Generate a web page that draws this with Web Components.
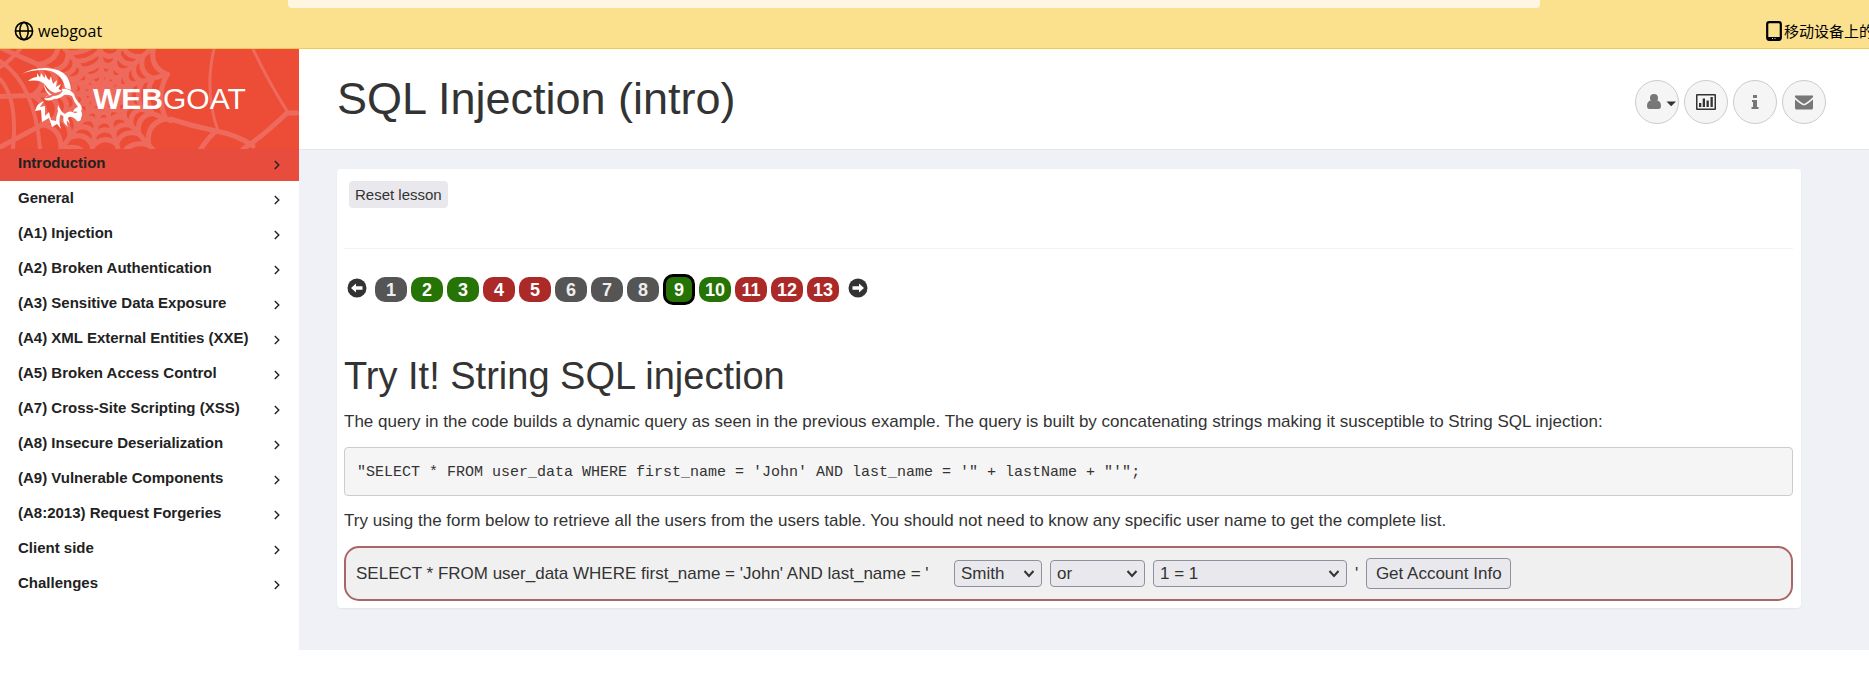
<!DOCTYPE html>
<html lang="en">
<head>
<meta charset="utf-8">
<title>WebGoat</title>
<style>
html,body{margin:0;background:#fff}
body{font-family:"Liberation Sans",Arial,sans-serif;color:#333;font-size:17px}
</style>
</head>
<body>
<goat-app></goat-app>
<script>
const define=(name,html,setup)=>customElements.define(name,class extends HTMLElement{
  constructor(){
    super();
    const t=document.createElement('template');
    t.innerHTML='<style>*{box-sizing:border-box}:host{display:block;box-sizing:border-box}</style>'+html;
    this.attachShadow({mode:'open'}).append(t.content.cloneNode(true));
  }
  connectedCallback(){if(setup)setup(this,this.shadowRoot)}
});

define('bookmark-bar',`<style>
:host{height:49px;background:#fbe18e;border-bottom:1px solid #f3c950;color:#000;font:16px "Open Sans","Noto Sans CJK SC",sans-serif;overflow:hidden}
.field{height:8px;margin:0 329px 0 288px;border-radius:0 0 4px 4px;background:#fff6e1}
.row{display:flex;justify-content:space-between;align-items:center;height:46px}
a{display:flex;align-items:center;color:inherit;text-decoration:none;white-space:nowrap;line-height:24px}
.l{gap:4px;margin-left:14px}
.r{gap:2px;width:103px;font-size:15px;font-family:"Noto Sans CJK SC",sans-serif}
svg{flex:none}
</style>
<div class="field"></div>
<div class="row">
<a class="l" href="#"><svg width="20" height="20" viewBox="0 0 20 20" fill="none" stroke="#000" stroke-width="1.6"><circle cx="10" cy="10" r="8.6"/><ellipse cx="10" cy="10" rx="4.2" ry="8.6"/><path d="M1.5 10h17"/></svg><span>webgoat</span></a>
<a class="r" href="#"><svg width="16" height="20" viewBox="0 0 16 20"><rect x="1.2" y="1.2" width="13.6" height="17.6" rx="2" fill="none" stroke="#000" stroke-width="2.2"/><path d="M1 16h14v2.500H1z"/><path d="M6 17.500h1M8.500 17.500h1" stroke="#fbe18e"/></svg><span>移动设备上的</span></a>
</div>`);

define('goat-logo',`<style>
:host{height:100px;background:#ed4c37;overflow:hidden}
.g{display:grid}.g>*{grid-area:1/1}
a{display:flex;align-items:center;height:100px;padding-left:22px;gap:10px;color:#fff;text-decoration:none;font-size:30px;line-height:36px}
b{font-weight:700}
</style>
<div class="g">
<svg class="web" width="299" height="100" viewBox="0 0 299 100" fill="none" stroke="#ee6a5c" stroke-linecap="round"></svg>
<a href="#"><svg width="61" height="62" viewBox="0 0 61 62" fill="#fff">
<path d="M0 6Q9 0 24 0Q43 1 47 13Q49 17 49 22L43 20Q42 12 36 7Q30 2 21 2Q8 2 0 6z"/>
<path d="M6 13Q12 8 20 9Q27 10 31 16Q34 20 40 23L33 25Q27 23 24 18Q19 11 6 13z"/>
<path d="M15 5l3 5 1-5 4 6 0-5 4 7 2-5 2 8 4-4-1 7 5-3-3 6-4-1-8-8-9-4z"/>
<path d="M22 16Q24 23 30 27Q25 27 23 30Q27 31 31 28Q37 28 40 24L44 25Q39 31 32 31Q26 34 22 31L27 27Q22 22 22 16z"/>
<path d="M40 21Q47 20 52 26Q53 31 58 36Q61 40 59 43Q61 46 59 50Q59 54 55 53Q51 48 47 49Q43 52 46 59Q39 54 42 47Q47 41 53 45L56 44Q53 43 51 44Q52 40 56 39Q52 34 50 28Q46 26 41 27z"/>
<path d="M22 33Q15 35 13 43L19 42L20 54L27 50L30 59L35 56L39 61Q36 52 39 45L36 43Q34 49 34 53L29 52L27 44L23 48L23 38L18 39z"/>
<path d="M36 37Q34 45 41 48L48 56Q45 46 40 44z"/>
</svg><span><b>WEB</b>GOAT</span></a></div>`,(h,r)=>{
  const cx=102,cy=44;
  const ang=[-92,-68,-42,-16,22,48,74,100,126,152,178,204,230];
  const reach=[90,90,90,66,74,100,90,90,100,130,140,120,100];
  const p=(a,d)=>{const t=a*Math.PI/180;return (cx+Math.cos(t)*d).toFixed(1)+' '+(cy+Math.sin(t)*d).toFixed(1)};
  let s='';
  ang.forEach((a,i)=>{
    const b=ang[(i+1)%ang.length]+(i===ang.length-1?360:0);
    s+=`<path stroke-width="5" d="M${cx} ${cy}L${p(a,reach[i])}"/>`;
    [11,21,31,42,53,68].forEach((d,k)=>{s+=`<path stroke-width="${k<3?6:5}" d="M${p(a,d+(i%3))}Q${p((a+b)/2,d*.78)} ${p(b,d+((i+1)%3))}"/>`});
  });
  s+=`<path stroke-width="5" d="M170 70Q192 77 216 82Q238 86 253 97M216 82Q207 90 200 101M243 100Q262 88 287 64M287 64H297"/>
  <path stroke-width="3" d="M287 62Q268 32 253 0M218 82Q204 42 214 0"/>
  <path stroke-width="4" d="M0 30Q18 50 13 100M0 12Q35 35 40 100M20 0Q8 14 0 18"/>`;
  r.querySelector('.web').innerHTML=s;
});

define('nav-item',`<style>
:host{height:35px}
:host([active]){height:32px;background:#e84c3d}
a{display:flex;align-items:center;justify-content:space-between;height:34px;padding:0 19px 0 18px;color:#222;text-decoration:none;font-weight:700;font-size:15px;line-height:20px}
:host([active]) a{height:28px}
svg{margin-top:3px}
</style><a href="#"><slot></slot><svg width="6" height="10" viewBox="0 0 6 10" fill="none" stroke="#222" stroke-width="1.4"><path d="M.8 1l4 4-4 4"/></svg></a>`);

define('side-nav',`<style>:host{width:299px;flex:none;background:#fff}</style>
<goat-logo></goat-logo><nav>
<nav-item active>Introduction</nav-item><nav-item>General</nav-item><nav-item>(A1) Injection</nav-item><nav-item>(A2) Broken Authentication</nav-item><nav-item>(A3) Sensitive Data Exposure</nav-item><nav-item>(A4) XML External Entities (XXE)</nav-item><nav-item>(A5) Broken Access Control</nav-item><nav-item>(A7) Cross-Site Scripting (XSS)</nav-item><nav-item>(A8) Insecure Deserialization</nav-item><nav-item>(A9) Vulnerable Components</nav-item><nav-item>(A8:2013) Request Forgeries</nav-item><nav-item>Client side</nav-item><nav-item>Challenges</nav-item></nav>`);

define('round-button',`<style>
button{display:flex;align-items:center;justify-content:center;width:44px;height:44px;padding:0;border:1px solid #ccc;border-radius:50%;background:#f5f5f5;color:#777}
</style><button type="button"><slot></slot></button>`,(h,r)=>r.querySelector('button').setAttribute('aria-label',h.getAttribute('label')));

define('lesson-header',`<style>
:host{display:flex;justify-content:space-between;align-items:center;height:101px;padding:0 43px 0 38px;background:#fff;border-bottom:1px solid #e4e6eb}
h1{margin:0;font-size:45px;line-height:50px;font-weight:400}
.b{display:flex;gap:5px;padding-top:6px}
</style><h1>SQL Injection (intro)</h1>
<div class="b">
<round-button label="User menu"><svg width="40" height="18" viewBox="0 0 40 18"><g fill="#777"><circle cx="17" cy="5" r="4"/><path d="M10 13q0-5 4-5.500q3 2 6 0q4 .5 4 5.500q0 3-2.500 3h-9Q10 16 10 13z"/></g><path fill="#333" d="M29.500 8.500h9.500L34.200 13.300z"/></svg></round-button>
<round-button label="Report card"><svg width="20" height="16" viewBox="0 0 20 16" fill="#333"><path fill-rule="evenodd" d="M1 0h18q1 0 1 1v14q0 1-1 1H1q-1 0-1-1V1q0-1 1-1zM1.500 1.500v13h17v-13z"/><path d="M3 9h2.300v4H3zM6.700 4.500H9V13H6.700zM10.500 6.500h2.300V13h-2.300zM14.500 3h2.300v10h-2.300z"/></svg></round-button>
<round-button label="About"><svg width="8" height="16" viewBox="0 0 8 16" fill="#777"><path d="M2 1h4v3H2zM1 6h5v7h1.500v2H.500v-2H2V8H1z"/></svg></round-button>
<round-button label="Contact"><svg width="20" height="16" viewBox="0 0 20 16" fill="#777"><path d="M1 1.500h18v1.800Q15 7 11 9.500q-1 .6-2 0Q5 7 1 3.300zM1 5.500Q5 9 8 10.700q2 1.200 4 0Q15 9 19 5.500V14q0 1.500-1.500 1.500h-15Q1 15.500 1 14z"/></svg></round-button>
</div>`);

define('page-link',`<style>
a{display:block;width:32px;height:25px;border-radius:10px;background:#555;color:#eee;text-align:center;text-decoration:none;font-weight:700;font-size:18px;line-height:27px}
:host([state=done]) a{background:#267306;color:#fff}
:host([state=todo]) a{background:#ab2a27;color:#fff}
:host([current]) a{height:31px;border:3px solid #000;width:32px}
</style><a href="#"><slot></slot></a>`);

define('page-arrow',`<style>a{display:block}svg{display:block}</style><a href="#"><svg width="20" height="20" viewBox="0 0 20 20"><circle cx="10" cy="10" r="9.500" fill="#333"/><path fill="#fff" d="M4 10l5-4.500v2.800h6.500v3.400H9v2.800z"/></svg></a>`,(h,r)=>{
  const next=h.hasAttribute('next');
  r.querySelector('a').setAttribute('aria-label',next?'Next page':'Previous page');
  if(next)r.querySelector('path').setAttribute('d','M16 10l-5-4.500v2.800H4.500v3.400H11v2.800z');
});

define('page-strip',`<style>
:host{display:flex;align-items:center;gap:4px;height:31px}
page-arrow{padding:0 4px 3px 3px}page-arrow[next]{padding:0 3px 3px 5px}
</style><page-arrow></page-arrow>
<page-link>1</page-link><page-link state="done">2</page-link><page-link state="done">3</page-link><page-link state="todo">4</page-link><page-link state="todo">5</page-link><page-link>6</page-link><page-link>7</page-link><page-link>8</page-link><page-link state="done" current>9</page-link><page-link state="done">10</page-link><page-link state="todo">11</page-link><page-link state="todo">12</page-link><page-link state="todo">13</page-link>
<page-arrow next></page-arrow>`);

define('query-form',`<style>
:host{height:55px;border:2px solid #a66;border-radius:15px;background:#f0f0f0;padding:0 10px}
form{display:flex;align-items:center;gap:8px;height:51px;line-height:24px;white-space:nowrap}
label{min-width:590px}
.pick{display:grid;align-items:center}
.pick>*{grid-area:1/1}
.pick svg{justify-self:end;margin-right:7px;pointer-events:none}
select,button{font:inherit;color:#333;background:#e9e9ed;border:1px solid #8f8f9d;border-radius:4px}
select{appearance:none;height:31px;height:27px;padding:0 24px 0 6px;width:100%}
.a{width:88px}.b{width:95px}.c{width:194px}
button{height:31px;min-width:145px;padding:0 7px}
</style>
<form><label for="n">SELECT * FROM user_data WHERE first_name = 'John' AND last_name = '</label>
<span class="pick a"><select id="n"><option>Smith</option></select><svg width="12" height="8" viewBox="0 0 12 8" fill="none" stroke="#333" stroke-width="2"><path d="M1.500 1L6 6l4.500-5"/></svg></span>
<span class="pick b"><select aria-label="Operator"><option>or</option></select><svg width="12" height="8" viewBox="0 0 12 8" fill="none" stroke="#333" stroke-width="2"><path d="M1.500 1L6 6l4.500-5"/></svg></span>
<span class="pick c"><select aria-label="Condition"><option>1 = 1</option></select><svg width="12" height="8" viewBox="0 0 12 8" fill="none" stroke="#333" stroke-width="2"><path d="M1.500 1L6 6l4.500-5"/></svg></span>
<span>'</span><button type="button">Get Account Info</button></form>`);

define('lesson-panel',`<style>
:host{background:#fff;border-radius:4px;box-shadow:0 1px 2px rgba(0,0,0,.06);padding:12px 8px 7px 7px}
.tools{height:68px;padding-left:5px;border-bottom:1px solid #f3f3f5}
.tools button{height:27px;padding:0 6px;border:0;border-radius:4px;background:#e9e9ed;color:#333;font:15px "Liberation Sans",Arial,sans-serif}
page-strip{margin-top:25px}
h2{margin:46px 0 0;font-size:38px;line-height:50px;font-weight:400}
p{margin:9px 0 0;line-height:24px}
pre{margin:13px 0 0;height:49px;padding:0 12px;border:1px solid #ccc;border-radius:4px;background:#f5f5f5;font:15px/50px "Liberation Mono","Courier New",monospace}
pre+p{margin-top:13px}
query-form{margin-top:13px}
</style>
<div class="tools"><button type="button">Reset lesson</button></div>
<page-strip></page-strip>
<h2>Try It! String SQL injection</h2>
<p>The query in the code builds a dynamic query as seen in the previous example. The query is built by concatenating strings making it susceptible to String SQL injection:</p>
<pre>"SELECT * FROM user_data WHERE first_name = 'John' AND last_name = '" + lastName + "'";</pre>
<p>Try using the form below to retrieve all the users from the users table. You should not need to know any specific user name to get the complete list.</p>
<query-form></query-form>`);

define('goat-app',`<style>
.body{display:flex;align-items:flex-start}
main{flex:1;min-width:0;background:#f0f1f7;padding-bottom:42px}
lesson-panel{margin:19px 68px 0 38px}
</style><bookmark-bar></bookmark-bar><div class="body"><side-nav></side-nav><main><lesson-header></lesson-header><lesson-panel></lesson-panel></main></div>`);
</script>
</body>
</html>
